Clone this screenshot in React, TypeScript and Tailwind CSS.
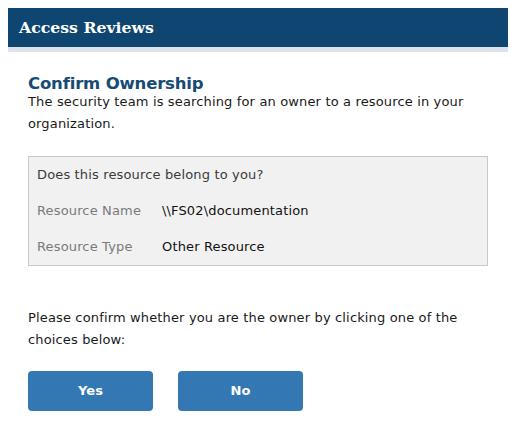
import React from "react";

export default function App() {
  const sans = { fontFamily: '"DejaVu Sans", Verdana, sans-serif' };
  return (
    <div className="w-[516px] h-[424px] bg-white pt-2 px-2 overflow-hidden" style={sans}>
      <div className="h-[39px] bg-[#0e4571] flex items-center pl-[11px]">
        <span
          className="text-white font-bold text-[15.7px] leading-none"
          style={{ fontFamily: '"DejaVu Serif", Georgia, serif' }}
        >
          Access Reviews
        </span>
      </div>
      <div className="h-[5px] bg-[#dce3ea]" />
      <div className="px-5 tracking-[0.15px]">
        <h1 className="mt-[25px] text-[16.5px] leading-[14px] font-bold tracking-[-0.18px] text-[#174a74]">
          Confirm Ownership
        </h1>
        <p className="text-[13px] leading-[22px] text-[#1a1a1a]">
          The security team is searching for an owner to a resource in your organization.
        </p>
        <div className="mt-[21px] border border-[#c8c8c8] bg-[#f1f1f1] text-[13px] px-2">
          <div className="h-[36px] flex items-center text-[#3a3a3a]">
            Does this resource belong to you?
          </div>
          <div className="h-[36px] flex items-center">
            <span className="w-[125px] text-[#7a7a7a]">Resource Name</span>
            <span className="text-[#111]">\\FS02\documentation</span>
          </div>
          <div className="h-[36px] flex items-center">
            <span className="w-[125px] text-[#7a7a7a]">Resource Type</span>
            <span className="text-[#111]">Other Resource</span>
          </div>
        </div>
        <p className="mt-[41px] text-[13px] leading-[22px] text-[#1a1a1a]">
          Please confirm whether you are the owner by clicking one of the choices below:
        </p>
        <div className="mt-[19.5px] flex gap-[25px]">
          <button className="w-[125px] h-[40px] rounded-[4px] bg-[#3478b3] text-white font-bold text-[13px]">
            Yes
          </button>
          <button className="w-[125px] h-[40px] rounded-[4px] bg-[#3478b3] text-white font-bold text-[13px]">
            No
          </button>
        </div>
      </div>
    </div>
  );
}
